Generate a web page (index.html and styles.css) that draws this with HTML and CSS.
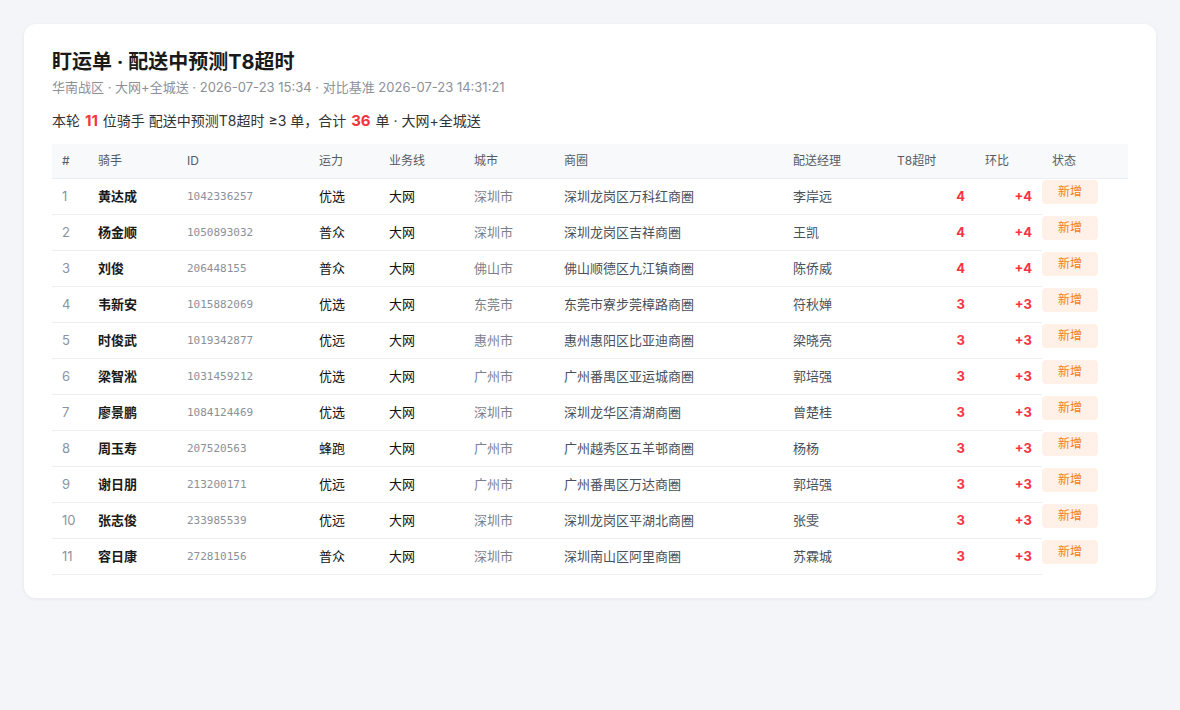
FILE: index.html
```html
<!DOCTYPE html>
<html lang="zh-CN">
<head>
<meta charset="utf-8">
<title>盯运单 · 配送中预测T8超时</title>
<link rel="stylesheet" href="styles.css">
</head>
<body>
<div class="card">
  <h1 class="title">盯运单 · 配送中预测T8超时</h1>
  <div class="sub">华南战区 · 大网+全城送 · 2026-07-23 15:34 · 对比基准 2026-07-23 14:31:21</div>
  <div class="summary">本轮 <b class="hl">11</b> 位骑手 配送中预测T8超时 ≥3 单，合计 <b class="hl">36</b> 单 · 大网+全城送</div>
  <table class="tbl">
    <colgroup>
      <col class="c-idx"><col class="c-name"><col class="c-id"><col class="c-cap"><col class="c-line"><col class="c-city"><col class="c-area"><col class="c-mgr"><col class="c-t8"><col class="c-chg"><col class="c-st">
    </colgroup>
    <thead>
      <tr><th>#</th><th>骑手</th><th>ID</th><th>运力</th><th>业务线</th><th>城市</th><th>商圈</th><th>配送经理</th><th>T8超时</th><th>环比</th><th>状态</th></tr>
    </thead>
    <tbody>
      <tr><td class="idx">1</td><td class="name">黄达成</td><td class="rid">1042336257</td><td class="cap">优选</td><td class="cap">大网</td><td class="city">深圳市</td><td class="area">深圳龙岗区万科红商圈</td><td class="area">李岸远</td><td class="num">4</td><td class="num">+4</td><td class="st"><span class="badge">新增</span></td></tr>
      <tr><td class="idx">2</td><td class="name">杨金顺</td><td class="rid">1050893032</td><td class="cap">普众</td><td class="cap">大网</td><td class="city">深圳市</td><td class="area">深圳龙岗区吉祥商圈</td><td class="area">王凯</td><td class="num">4</td><td class="num">+4</td><td class="st"><span class="badge">新增</span></td></tr>
      <tr><td class="idx">3</td><td class="name">刘俊</td><td class="rid">206448155</td><td class="cap">普众</td><td class="cap">大网</td><td class="city">佛山市</td><td class="area">佛山顺德区九江镇商圈</td><td class="area">陈侨威</td><td class="num">4</td><td class="num">+4</td><td class="st"><span class="badge">新增</span></td></tr>
      <tr><td class="idx">4</td><td class="name">韦新安</td><td class="rid">1015882069</td><td class="cap">优选</td><td class="cap">大网</td><td class="city">东莞市</td><td class="area">东莞市寮步莞樟路商圈</td><td class="area">符秋婵</td><td class="num">3</td><td class="num">+3</td><td class="st"><span class="badge">新增</span></td></tr>
      <tr><td class="idx">5</td><td class="name">时俊武</td><td class="rid">1019342877</td><td class="cap">优远</td><td class="cap">大网</td><td class="city">惠州市</td><td class="area">惠州惠阳区比亚迪商圈</td><td class="area">梁晓亮</td><td class="num">3</td><td class="num">+3</td><td class="st"><span class="badge">新增</span></td></tr>
      <tr><td class="idx">6</td><td class="name">梁智淞</td><td class="rid">1031459212</td><td class="cap">优选</td><td class="cap">大网</td><td class="city">广州市</td><td class="area">广州番禺区亚运城商圈</td><td class="area">郭培强</td><td class="num">3</td><td class="num">+3</td><td class="st"><span class="badge">新增</span></td></tr>
      <tr><td class="idx">7</td><td class="name">廖景鹏</td><td class="rid">1084124469</td><td class="cap">优选</td><td class="cap">大网</td><td class="city">深圳市</td><td class="area">深圳龙华区清湖商圈</td><td class="area">曾楚桂</td><td class="num">3</td><td class="num">+3</td><td class="st"><span class="badge">新增</span></td></tr>
      <tr><td class="idx">8</td><td class="name">周玉寿</td><td class="rid">207520563</td><td class="cap">蜂跑</td><td class="cap">大网</td><td class="city">广州市</td><td class="area">广州越秀区五羊邨商圈</td><td class="area">杨杨</td><td class="num">3</td><td class="num">+3</td><td class="st"><span class="badge">新增</span></td></tr>
      <tr><td class="idx">9</td><td class="name">谢日朋</td><td class="rid">213200171</td><td class="cap">优远</td><td class="cap">大网</td><td class="city">广州市</td><td class="area">广州番禺区万达商圈</td><td class="area">郭培强</td><td class="num">3</td><td class="num">+3</td><td class="st"><span class="badge">新增</span></td></tr>
      <tr><td class="idx">10</td><td class="name">张志俊</td><td class="rid">233985539</td><td class="cap">优远</td><td class="cap">大网</td><td class="city">深圳市</td><td class="area">深圳龙岗区平湖北商圈</td><td class="area">张雯</td><td class="num">3</td><td class="num">+3</td><td class="st"><span class="badge">新增</span></td></tr>
      <tr><td class="idx">11</td><td class="name">容日康</td><td class="rid">272810156</td><td class="cap">普众</td><td class="cap">大网</td><td class="city">深圳市</td><td class="area">深圳南山区阿里商圈</td><td class="area">苏霖城</td><td class="num">3</td><td class="num">+3</td><td class="st"><span class="badge">新增</span></td></tr>
    </tbody>
  </table>
</div>
</body>
</html>
```

FILE: styles.css
```css
* { box-sizing: border-box; }
html, body { margin: 0; padding: 0; }
body {
  background: #f4f5f9;
  font-family: Inter, "Noto Sans CJK SC", sans-serif;
  color: #333;
  padding: 24px;
}
.card {
  background: #fff;
  border-radius: 12px;
  box-shadow: 0 1px 4px rgba(20, 30, 60, 0.06);
  padding: 24px 28px 23px;
}
.title {
  margin: 0;
  font-size: 20px;
  line-height: 28px;
  font-weight: 700;
  color: #1a1a1a;
}
.sub {
  margin-top: 2px;
  font-size: 13px;
  line-height: 18px;
  color: #8c9099;
}
.summary {
  margin-top: 14px;
  font-size: 14px;
  line-height: 21px;
  color: #333;
}
.hl {
  color: #f5343f;
  font-size: 15px;
  font-weight: 700;
  margin: 0 1px;
}
.tbl {
  margin-top: 13px;
  width: 100%;
  border-collapse: collapse;
  table-layout: fixed;
}
.c-idx { width: 36px; }
.c-name { width: 89px; }
.c-id { width: 132px; }
.c-cap { width: 70px; }
.c-line { width: 85px; }
.c-city { width: 90px; }
.c-area { width: 229px; }
.c-mgr { width: 104px; }
.c-t8 { width: 88px; }
.c-chg { width: 67px; }
.c-st { width: 86px; }
.tbl th {
  background: #f8f9fb;
  font-size: 12px;
  font-weight: 400;
  color: #555b66;
  text-align: left;
  padding: 8px 10px;
  line-height: 18px;
  border-bottom: 1px solid #eceef2;
}
.tbl td {
  font-size: 13px;
  line-height: 19px;
  padding: 8px 10px;
  border-bottom: 1px solid #eceef2;
  white-space: nowrap;
}
.tbl td.idx { color: #8b93a3; }
.tbl td.name { font-weight: 700; color: #1a1a1a; }
.tbl td.rid {
  font-family: "DejaVu Sans Mono", monospace;
  font-size: 11px;
  color: #8c9099;
}
.tbl td.cap { color: #111; }
.tbl td.city { color: #7b818c; }
.tbl td.area { color: #4a505a; }
.tbl td.num {
  text-align: right;
  color: #f5343f;
  font-weight: 700;
}
.tbl td.st {
  border-bottom: none;
  padding: 1px 0 0;
  vertical-align: top;
}
.badge {
  display: inline-block;
  width: 56px;
  height: 24px;
  line-height: 24px;
  text-align: center;
  font-size: 12px;
  color: #fa7d14;
  background: #fff1e7;
  border-radius: 4px;
}
```
